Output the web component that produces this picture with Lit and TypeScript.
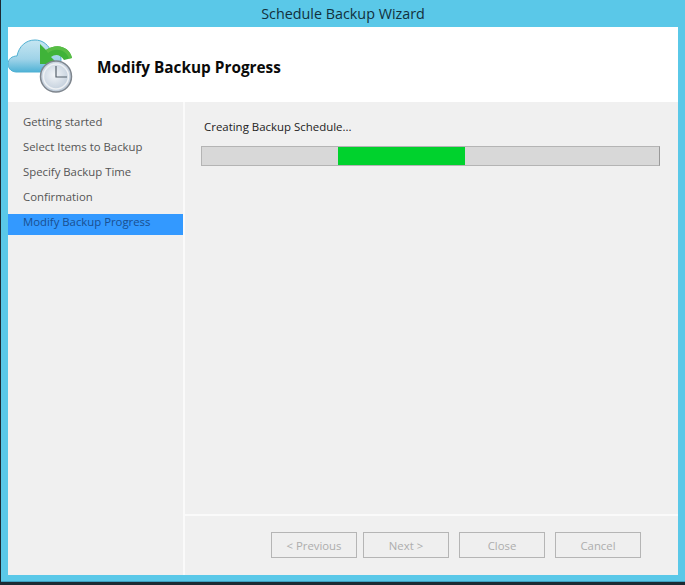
import { LitElement, html, css, svg } from "lit";
import { customElement } from "lit/decorators.js";

const icon = svg`<svg width="70" height="56" viewBox="0 0 70 56">
<defs>
<linearGradient id="c" x1="0" y1="0" x2="0" y2="1"><stop offset="0" stop-color="#c6e6f2"/><stop offset=".6" stop-color="#9fd3e8"/><stop offset="1" stop-color="#4fb2d6"/></linearGradient>
<radialGradient id="f" cx=".45" cy=".45" r=".6"><stop offset="0" stop-color="#f2f5f8"/><stop offset="1" stop-color="#b9c7d6"/></radialGradient>
</defs>
<path d="M8 33C2 32.500 0 28 0 25C0 20 4 17 9 17C11 7 18 1 27 1C34 1 39 5 42 10C46 8 53 13 53 20C53 28 49 33 44 33Z" fill="url(#c)" stroke="#4fb0d2" stroke-width="1"/>
<path d="M32 5V25H50L43 18C47 15 52 15 56 21L64 19C62 9 50 3 38 11Z" fill="#3fb339"/>
<path d="M38 11C50 3 62 9 64 19L61 19.500C58 11 48 8 40 14Z" fill="#58bd45"/>
<circle cx="48" cy="37.500" r="15.500" fill="url(#f)" stroke="#7f868e" stroke-width="1.500"/>
<circle cx="48" cy="37.500" r="12.500" fill="none" stroke="#eef1f4" stroke-width="1.500"/>
<path d="M48 27V38H59" fill="none" stroke="#55606b" stroke-width="1.200"/>
</svg>`;

@customElement("app-root")
export class AppRoot extends LitElement {
  static styles = css`
    :host { display: block; width: 685px; height: 585px; background: #1c2a33; overflow: hidden;
      font-family: "Open Sans", "Liberation Sans", sans-serif; }
    .window { margin-left: 1px; width: 684px; height: 582px; background: #5ac8e8; display: flex; flex-direction: column;
      box-sizing: border-box; padding: 0 7px 6px 7px; border-bottom: 1px solid #3f9fc0; }
    .title { height: 27px; flex: none; display: flex; align-items: center; justify-content: center;
      font-size: 14.35px; color: #12303c; padding-bottom: 1px; box-sizing: border-box; }
    .header { height: 75px; flex: none; background: #fff; display: flex; align-items: center; box-sizing: border-box; }
    .icon { width: 70px; height: 56px; margin-top: 4px; flex: none; }
    .header h1 { margin: 0 0 0 19px; font-size: 15.35px; line-height: 20px; font-weight: 700; color: #0a0a0a; padding-top: 5px; }
    .body { flex: 1; display: flex; min-height: 0; background: #f0f0f0; }
    .side { padding-top: 7px; box-sizing: border-box; border-right: 2px solid #fafafa; width: 177px; flex: none; }
    .step { height: 25px; line-height: 25px; padding-left: 15px; font-size: 11.35px; color: #555; box-sizing: border-box; }
    .step.active { height: 21px; line-height: 15px; margin-top: 5px; background: #3399ff; color: #1a4f8f; width: 175px; }
    .main { flex: 1; display: flex; flex-direction: column; min-width: 0; }
    .content { flex: 1; padding: 15px 18px 0 16px; }
    .status { font-size: 11.45px; line-height: 20px; color: #222; padding-left: 3px; }
    .bar { margin-top: 9px; height: 20px; box-sizing: border-box; background: #d8d8d8; border: 1px solid #b4b4b4; border-right-color: #999; overflow: hidden; }
    .fill { height: 100%; margin-left: 136px; width: 127px; background: #00d22d; }
    .footer { height: 61px; flex: none; border-top: 2px solid #fafafa; box-sizing: border-box; display: flex; justify-content: flex-end;
      align-items: flex-start; padding: 16px 37px 0 0; gap: 6px; }
    .btn { width: 86px; height: 26px; box-sizing: border-box; border: 1px solid #b5b5b5; background: #efefef; color: #adadad;
      font-size: 11.35px; display: flex; align-items: center; justify-content: center; }
    .btn.gap { margin-left: 4px; }
  `;
  render() {
    const steps = ["Getting started", "Select Items to Backup", "Specify Backup Time", "Confirmation"];
    return html`<div class="window">
      <div class="title">Schedule Backup Wizard</div>
      <div class="header"><div class="icon">${icon}</div><h1>Modify Backup Progress</h1></div>
      <div class="body">
        <div class="side">
          ${steps.map((s) => html`<div class="step">${s}</div>`)}
          <div class="step active">Modify Backup Progress</div>
        </div>
        <div class="main">
          <div class="content">
            <div class="status">Creating Backup Schedule...</div>
            <div class="bar"><div class="fill"></div></div>
          </div>
          <div class="footer">
            <div class="btn">&lt; Previous</div>
            <div class="btn">Next &gt;</div>
            <div class="btn gap">Close</div>
            <div class="btn gap">Cancel</div>
          </div>
        </div>
      </div>
    </div>`;
  }
}
